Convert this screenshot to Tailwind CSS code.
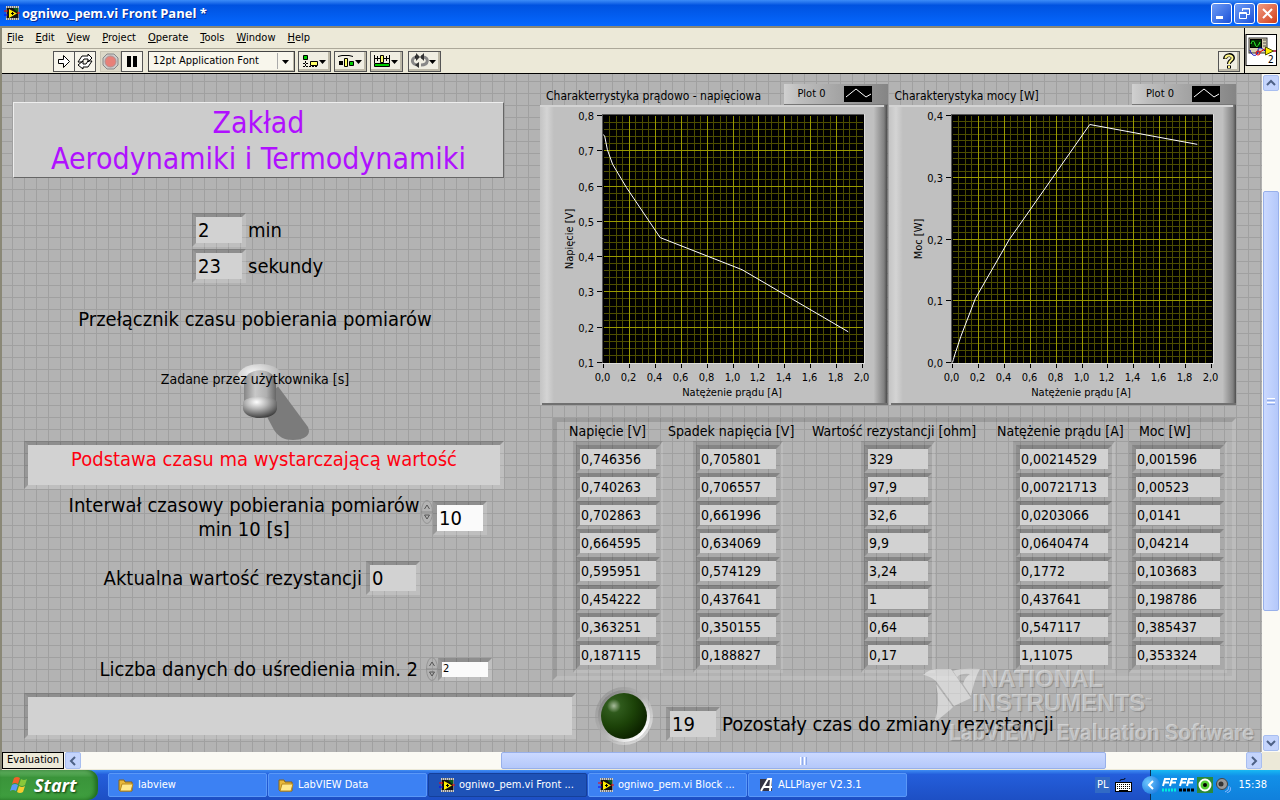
<!DOCTYPE html>
<html lang="pl">
<head>
    <meta charset="UTF-8">
    <meta name="viewport" content="width=device-width, initial-scale=1.0">
    <title>ogniwo_pem.vi Front Panel *</title>
    <script src="https://cdn.jsdelivr.net/npm/@tailwindcss/browser@4"></script>
</head>
<body class="min-h-screen flex flex-col bg-[#ece9d8] text-black text-[11px] leading-4 font-['DejaVu_Sans_Condensed','DejaVu_Sans',sans-serif]">

    <!-- Shared icons -->
    <svg class="hidden">
        <symbol id="vi-icon" viewBox="0 0 16 16">
            <rect x="2" y="1" width="13" height="14" fill="#777"/>
            <path d="M2 2h13M2 14h13" stroke="#ccc" stroke-width="2" stroke-dasharray="1 1"/>
            <rect x="3" y="3" width="11" height="10" fill="#111"/>
            <path d="M9 3h5v5z" fill="#0a5a1a"/>
            <path d="M5 4l8 4.500l-8 4.500z" fill="#ffee00"/>
            <path d="M7 8.500h3M8.500 7v3" stroke="#000"/>
            <path d="M0 6h4M13 8h3" stroke="#f00"/>
            <path d="M0 10h4" stroke="#00f"/>
        </symbol>
        <symbol id="folder-icon" viewBox="0 0 16 16">
            <path d="M1 3h5l1 2h7v9H2L1 13z" fill="#e8b83a" stroke="#8a6414"/>
            <path d="M4 7h11l-2 7H2z" fill="#ffe98c" stroke="#b98a1e"/>
        </symbol>
        <symbol id="spin-icon" viewBox="0 0 12 24">
            <ellipse cx="6" cy="12" rx="5.500" ry="11.500" fill="url(#spin-fill)" stroke="#959595"/>
            <path d="M0 12h12" stroke="#8a8a8a"/>
            <path d="M3.500 9L6 5l2.500 4M3.500 15L6 19l2.500-4z" fill="none" stroke="#555"/>
        </symbol>
        <defs>
            <linearGradient id="spin-fill">
                <stop offset="0" stop-color="#eee"/>
                <stop offset="1" stop-color="#a0a0a0"/>
            </linearGradient>
        </defs>
    </svg>

    <!-- Title bar -->
    <header class="h-[26px] shrink-0 flex items-center pl-1 pr-[2px] bg-linear-to-b from-[#3c8cf8] via-[#0052e0] via-20% to-[#0668ff]">
        <svg class="size-4"><use href="#vi-icon"/></svg>
        <h1 class="ml-[2px] flex-1 text-[13px] font-bold text-white font-['Open_Sans',sans-serif] [text-shadow:1px_1px_#0a2a90]">ogniwo_pem.vi Front Panel *</h1>
        <div class="flex gap-[2px]">
            <button aria-label="Minimize" class="w-[21px] h-[21px] rounded-[3px] border border-white bg-linear-to-br from-[#6f9cf5] to-[#1c4fd8]">
                <svg class="size-[19px]" viewBox="0 0 19 19"><path d="M4 13.500h7" stroke="#fff" stroke-width="3"/></svg>
            </button>
            <button aria-label="Restore" class="w-[21px] h-[21px] rounded-[3px] border border-white bg-linear-to-br from-[#6f9cf5] to-[#1c4fd8]">
                <svg class="size-[19px]" viewBox="0 0 19 19" fill="none" stroke="#fff"><path d="M7.500 7V4.500h7v6H12M7 5h8M4.500 8.500h7v6h-7zM4 9.500h8"/></svg>
            </button>
            <button aria-label="Close" class="w-[21px] h-[21px] rounded-[3px] border border-white bg-linear-to-br from-[#f09a80] to-[#d03a10]">
                <svg class="size-[19px]" viewBox="0 0 19 19"><path d="M5 5l9 9M14 5l-9 9" stroke="#fff" stroke-width="2"/></svg>
            </button>
        </div>
    </header>

    <div class="flex-1 flex flex-col border-t-2 border-l-2 border-t-[#8a8877] border-l-[#8a8877]">
        <!-- Menu and toolbar -->
        <div class="flex h-[46px] border-b border-black shrink-0">
            <div class="flex-1">
                <nav class="h-[21px] flex items-center gap-3 pl-[5px] pb-px border-b border-[#aca899]">
                    <a href="#"><u>F</u>ile</a>
                    <a href="#"><u>E</u>dit</a>
                    <a href="#"><u>V</u>iew</a>
                    <a href="#"><u>P</u>roject</a>
                    <a href="#"><u>O</u>perate</a>
                    <a href="#"><u>T</u>ools</a>
                    <a href="#"><u>W</u>indow</a>
                    <a href="#"><u>H</u>elp</a>
                </nav>
                <div class="h-6 flex items-center pl-[51px] pr-1">
                    <button aria-label="Run" class="w-[22px] h-[21px] border border-[#555] bg-[#f6f4ea]">
                        <svg class="w-5 h-[19px]" viewBox="0 0 20 19"><path d="M4.500 7.500h5v-4l6 6l-6 6v-4h-5z" fill="#fff" stroke="#000"/></svg>
                    </button>
                    <button aria-label="Run continuously" class="w-[21px] h-[21px] border border-l-0 border-[#555] bg-[#f6f4ea]">
                        <svg class="w-5 h-[19px]" viewBox="0 0 20 19" fill="none" stroke="#000"><path d="M3 10l4-6h6V2l4 4l-4 4V7H9l-2 3zM17 9l-4 6H8v2l-5-4l5-4v3h3l2-3z" fill="#fff"/></svg>
                    </button>
                    <button aria-label="Abort" class="ml-1 w-[21px] h-[21px] border border-[#c8c4b4] bg-[#dcd8c8]">
                        <svg class="size-[19px]" viewBox="0 0 19 19"><path d="M6 2h7l4 4v7l-4 4H6l-4-4V6z" fill="#ccc" stroke="#888"/><circle cx="9.500" cy="9.500" r="5.500" fill="#e88078" stroke="#b09090"/></svg>
                    </button>
                    <button aria-label="Pause" class="w-[22px] h-[21px] border border-[#555] bg-[#f6f4ea]">
                        <svg class="w-5 h-[19px]" viewBox="0 0 20 19"><path d="M5 4h4v11H5zM11 4h4v11h-4z"/></svg>
                    </button>
                    <div class="relative ml-[5px]">
                        <select aria-label="Font" class="block appearance-none w-[147px] h-[21px] pl-1 pb-px text-[11px] border border-[#444] bg-[#f8f6ec] shadow-[inset_-1px_-1px_#bdb9a8]">
                            <option>12pt Application Font</option>
                        </select>
                        <svg class="absolute right-[2px] top-[2px] w-4 h-4 pointer-events-none" viewBox="0 0 16 16"><path d="M.5 0v16" stroke="#aaa"/><path d="M5 7h7l-3.500 4z"/></svg>
                    </div>
                    <div class="flex gap-[3px] ml-[3px]">
                        <button aria-label="Align objects" class="w-[33px] h-[21px] border border-[#555] bg-[#f0eee2] shadow-[inset_-2px_-2px_#bdb9a8]">
                            <svg class="w-[31px] h-[19px]" viewBox="0 0 31 19"><path d="M4.500 3.500h4v4h-4z" fill="#0c0" stroke="#000"/><path d="M6.500 9v5M4 11.500h5M4 14.500h15" stroke="#000" stroke-dasharray="2 1"/><path d="M11.500 9.500h7v4h-7z" fill="#ff6" stroke="#000"/><path d="M20 8h7l-3.500 4z"/></svg>
                        </button>
                        <button aria-label="Distribute objects" class="w-[33px] h-[21px] border border-[#555] bg-[#f0eee2] shadow-[inset_-2px_-2px_#bdb9a8]">
                            <svg class="w-[31px] h-[19px]" viewBox="0 0 31 19"><path d="M3 4.500l4-1h7l4 1" fill="none" stroke="#000"/><path d="M4 9h4v4H4z"/><path d="M9.500 6.500h3v8h-3z" fill="#ff6" stroke="#000"/><path d="M14.500 9.500h4v4h-4z" fill="#0c0" stroke="#000"/><path d="M20 8h7l-3.500 4z"/></svg>
                        </button>
                        <button aria-label="Resize objects" class="w-[33px] h-[21px] border border-[#555] bg-[#f0eee2] shadow-[inset_-2px_-2px_#bdb9a8]">
                            <svg class="w-[31px] h-[19px]" viewBox="0 0 31 19"><path d="M3.500 3v8M18.500 3v8M4 6.500h5M13 6.500h5M6.500 4v5M15.500 4v5" stroke="#000"/><path d="M9.500 3.500h3v7h-3z" fill="#ff6" stroke="#000"/><path d="M3.500 11.500h15v3h-15z" fill="#0c0" stroke="#000"/><path d="M20 8h7l-3.500 4z"/></svg>
                        </button>
                    </div>
                    <button aria-label="Reorder" class="ml-[5px] w-[33px] h-[21px] border border-[#555] bg-[#f0eee2] shadow-[inset_-2px_-2px_#bdb9a8]">
                        <svg class="w-[31px] h-[19px]" viewBox="0 0 31 19" fill="none"><path d="M10 13C1 13 2 5 8 5" stroke="#888" stroke-width="3"/><path d="M12 13c8 0 8-8 2-8" stroke="#888" stroke-width="3"/><path d="M6 5h3M12 5h3" stroke="#222" stroke-width="3"/><path d="M7 1v8l4-4zM15 1v8l-4-4zM10 10v6l-4-3z" fill="#333"/><path d="M20 8h7l-3.500 4z" fill="#000"/></svg>
                    </button>
                    <button aria-label="Help" class="ml-auto w-[22px] h-[21px] border border-[#555] bg-[#f0eee2] shadow-[inset_-2px_-2px_#bdb9a8]">
                        <svg class="w-5 h-[19px]" viewBox="0 0 20 19" fill="none"><path d="M6 7c0-5 8-5 8-1c0 3-4 2-4 6M10 13.500v3" stroke="#000" stroke-width="4"/><path d="M6.500 6.500c0-4 7-4 7-.5c0 3-3.500 2-3.500 6M10 14v2" stroke="#fff68a" stroke-width="2"/></svg>
                    </button>
                </div>
            </div>
            <div class="border-l border-black w-9 pt-[6px]">
                <svg class="w-8 h-8" viewBox="0 0 32 32">
                    <rect x="1" y=".5" width="30.500" height="31" fill="#fff" stroke="#000"/>
                    <rect x="4" y="4" width="18" height="15" fill="#d8d0b0" stroke="#333"/>
                    <rect x="5.500" y="5.500" width="11" height="8" fill="#003000" stroke="#000"/>
                    <path d="M6 10c1-4 3-4 4 0s3 3 5-2" stroke="#3f3" fill="none"/>
                    <path d="M18 6h3M18 9h3M18 12h3" stroke="#555"/>
                    <path d="M5 16c2 8 8 6 8 1s4-3 7 0M27 17h4" stroke="#00c" fill="none"/>
                    <circle cx="13" cy="19" r="2" fill="none" stroke="#e00"/><path d="M15 18l5-3M27 17h4" stroke="#e00"/>
                    <path d="M20.500 13l8 4l-8 4z" fill="#fe0" stroke="#550"/>
                    <text x="23" y="29" font-size="10">2</text>
                </svg>
            </div>
        </div>

        <div class="flex flex-1">
            <!-- Front panel -->
            <main class="relative flex-1 min-w-0 bg-[#b3b3b3] bg-[linear-gradient(#a0a0a0_1px,transparent_1px),linear-gradient(90deg,#a0a0a0_1px,transparent_1px)] bg-[size:12px_12px] bg-[position:10px_7px]">
                <div class="flex">
                    <section class="w-[538px] shrink-0 text-[20px] leading-6">
                        <h2 class="ml-[11px] mt-7 w-[491px] h-[76px] pt-[2px] text-center text-[30px] leading-9 text-[#b010ff] bg-[#ccc] border border-t-[#eee] border-l-[#eee] border-r-[#666] border-b-[#666]">Zakład<br>Aerodynamiki i Termodynamiki</h2>

                        <div class="ml-[190px] mt-[35px] grid gap-[2px]">
                            <label class="flex items-center gap-[2px]">
                                <input readonly value="2" class="w-[54px] h-[34px] pl-[2px] bg-[#d2d2d2] bg-clip-padding border-4 border-t-black/20 border-l-black/15 border-b-white/15 border-r-white/15"> min
                            </label>
                            <label class="flex items-center gap-[2px]">
                                <input readonly value="23" class="w-[54px] h-[34px] pl-[2px] bg-[#d2d2d2] bg-clip-padding border-4 border-t-black/20 border-l-black/15 border-b-white/15 border-r-white/15"> sekundy
                            </label>
                        </div>

                        <p class="ml-[13px] w-[480px] mt-6 text-center">Przełącznik czasu pobierania pomiarów</p>

                        <button role="switch" aria-checked="false" class="relative block ml-[13px] w-[480px] h-[78px] mt-8">
                            <svg class="absolute left-[220px] top-0 w-[76px] h-[78px]" viewBox="0 0 76 78">
                                <defs>
                                    <linearGradient id="stem"><stop offset="0" stop-color="#858585"/><stop offset=".35" stop-color="#c8c8c8"/><stop offset=".7" stop-color="#b0b0b0"/><stop offset="1" stop-color="#666"/></linearGradient>
                                    <radialGradient id="knob" cx=".4" cy=".25" r=".8"><stop offset="0" stop-color="#fff"/><stop offset=".4" stop-color="#b5b5b5"/><stop offset="1" stop-color="#333"/></radialGradient>
                                    <radialGradient id="collar" cx=".35" cy=".3" r=".7"><stop offset="0" stop-color="#f4f4f4"/><stop offset="1" stop-color="#aaa"/></radialGradient>
                                </defs>
                                <path d="M30 50L42 22L73 64c4 9-5 13-15 13c-9 0-14-3-19-10z" fill="#7b7b7b"/>
                                <ellipse cx="25" cy="15" rx="23" ry="14" fill="url(#collar)"/>
                                <path d="M9 20C10 3 40 3 41 20V42H9z" fill="url(#stem)"/>
                                <path d="M8 39c4-7 30-7 34 0v7c-2 12-32 12-34 0z" fill="url(#knob)"/>
                            </svg>
                            <span class="absolute inset-x-0 top-1 text-[14px]">Zadane przez użytkownika [s]</span>
                        </button>

                        <output class="block ml-[22px] w-[480px] h-12 text-center leading-7 text-[#ff0010] bg-[#d2d2d2] bg-clip-padding border-4 border-t-black/20 border-l-black/15 border-b-white/15 border-r-white/15">Podstawa czasu ma wystarczającą wartość</output>

                        <div class="flex mt-1 ml-[65px]">
                            <label for="interval" class="w-[354px] text-center">Interwał czasowy pobierania pomiarów min 10 [s]</label>
                            <svg class="w-3 h-6 mt-[7px]"><use href="#spin-icon"/></svg>
                            <input id="interval" value="10" class="w-[54px] h-[34px] mt-2 pl-[2px] bg-[#fafafa] bg-clip-padding border-4 border-t-black/20 border-l-black/15 border-b-white/15 border-r-white/15">
                        </div>

                        <div class="flex items-center justify-end mt-5 mr-[120px] gap-1">
                            <label for="resistance">Aktualna wartość rezystancji</label>
                            <input id="resistance" readonly value="0" class="w-[54px] h-[34px] pl-[2px] bg-[#d2d2d2] bg-clip-padding border-4 border-t-black/20 border-l-black/15 border-b-white/15 border-r-white/15">
                        </div>

                        <div class="flex items-center justify-end mt-[62px] mr-[48px]">
                            <label for="samples" class="mr-2">Liczba danych do uśredienia min. 2</label>
                            <svg class="w-3 h-6"><use href="#spin-icon"/></svg>
                            <input id="samples" value="2" class="w-[54px] h-[23px] pl-[1px] text-[11px] bg-[#fafafa] bg-clip-padding border-4 border-t-black/20 border-l-black/15 border-b-white/15 border-r-white/15">
                        </div>
                    </section>

                    <section class="flex-1 min-w-0 mr-[26px] pt-[10px]">
                        <div class="flex gap-px">
                            <figure class="flex-1">
                                <figcaption class="flex h-[21px] text-xs">
                                    <span class="flex-1 pl-[6px] pt-1 whitespace-nowrap">Charakterrystyka prądowo - napięciowa</span>
                                    <span class="w-[104px] flex items-center justify-end gap-[18px] pr-4 text-[11px] bg-linear-to-r from-[#d0d0d0] via-[#bebebe] via-15% to-[#858585] border-b border-[#777]">Plot 0
                                        <svg class="w-7 h-4 bg-black"><path d="M2 11L12 3l10 8l5-3" fill="none" stroke="#fff"/></svg>
                                    </span>
                                </figcaption>
                                <svg id="chart-voltage" class="block w-full h-[300px]"></svg>
                            </figure>
                            <figure class="flex-1">
                                <figcaption class="flex h-[21px] text-xs">
                                    <span class="flex-1 pl-[6px] pt-1 whitespace-nowrap">Charakterystyka mocy [W]</span>
                                    <span class="w-[104px] flex items-center justify-end gap-[18px] pr-4 text-[11px] bg-linear-to-r from-[#d0d0d0] via-[#bebebe] via-15% to-[#858585] border-b border-[#777]">Plot 0
                                        <svg class="w-7 h-4 bg-black"><path d="M2 11L12 3l10 8l5-3" fill="none" stroke="#fff"/></svg>
                                    </span>
                                </figcaption>
                                <svg id="chart-power" class="block w-full h-[300px]"></svg>
                            </figure>
                        </div>

                        <!-- Measurements -->
                        <div class="ml-[13px] mt-[13px] pb-[3px] border-4 border-t-black/12 border-l-black/12 border-b-white/12 border-r-white/12">
                            <table class="table-fixed w-full text-[14px] leading-5">
                                <colgroup>
                                    <col class="w-[108px]"><col class="w-[145px]"><col class="w-[182px]"><col class="w-[137px]"><col>
                                </colgroup>
                                <thead>
                                    <tr class="h-[19px] text-left leading-[19px] whitespace-nowrap">
                                        <th class="p-0 pl-3 font-normal">Napięcie [V]</th>
                                        <th class="p-0 pl-[3px] font-normal">Spadek napięcia [V]</th>
                                        <th class="p-0 pl-[2px] font-normal">Wartość rezystancji [ohm]</th>
                                        <th class="p-0 pl-[5px] font-normal">Natężenie prądu [A]</th>
                                        <th class="p-0 pl-[10px] font-normal">Moc [W]</th>
                                    </tr>
                                </thead>
                                <tbody id="measurements"></tbody>
                            </table>
                        </div>
                    </section>
                </div>

                <div class="flex items-center mt-[6px] pb-[6px] text-[20px] leading-6">
                    <output class="block ml-[22px] w-[552px] h-[46px] bg-[#d2d2d2] bg-clip-padding border-4 border-t-black/20 border-l-black/15 border-b-white/15 border-r-white/15"></output>
                    <svg class="ml-[17px] w-[62px] h-[58px]" viewBox="-31 -29 62 58">
                        <defs>
                            <linearGradient id="ring" x1="0" y1="0" x2="1" y2="1"><stop offset="0" stop-color="#777"/><stop offset=".5" stop-color="#b3b3b3"/><stop offset=".85" stop-color="#fff"/><stop offset="1" stop-color="#c0c0c0"/></linearGradient>
                            <radialGradient id="led" cx=".28" cy=".28" r=".75"><stop offset="0" stop-color="#a8bc9c"/><stop offset=".2" stop-color="#2f5a1c"/><stop offset=".6" stop-color="#1c4208"/><stop offset="1" stop-color="#0d2400"/></radialGradient>
                        </defs>
                        <circle r="29" fill="url(#ring)" opacity=".5"/>
                        <circle r="26" fill="url(#ring)"/>
                        <circle r="23" fill="url(#led)"/>
                    </svg>
                    <label class="flex items-center gap-[2px] pt-4 ml-[11px] whitespace-nowrap">
                        <input readonly value="19" class="w-[54px] h-[34px] pl-[2px] bg-[#d2d2d2] bg-clip-padding border-4 border-t-black/20 border-l-black/15 border-b-white/15 border-r-white/15"> Pozostały czas do zmiany rezystancji
                    </label>
                </div>

                <!-- Evaluation watermark -->
                <div class="absolute right-[8px] bottom-[3px] w-[333px] h-[82px] pointer-events-none font-bold text-white/45 font-['Liberation_Sans',sans-serif] [text-shadow:1px_1px_1px_#0003]">
                    <svg class="absolute left-0 top-0 w-[60px] h-[58px]" viewBox="0 0 60 58" fill="#fff" fill-opacity=".45">
                        <path d="M2 8Q8 2 16 2H30L50 31L33 39L15 14Q9 9 2 8z"/>
                        <path d="M15 17L32 40L29 43L13 56Q20 36 15 17z"/>
                        <path d="M32 4Q38 1 59 2Q54 10 50 29L42 17Q44 10 49 7Q40 6 36 10z"/>
                    </svg>
                    <p class="pl-[60px] text-[24px] leading-6">NATIONAL</p>
                    <p class="pl-[51px] text-[24px] leading-6">INSTRUMENTS<span class="align-super text-[6px] leading-none">™</span></p>
                    <p class="flex justify-between pl-7 pt-1 text-[22px] leading-7 font-['Roboto',sans-serif]"><span>LabVIEW</span><span>Evaluation Software</span></p>
                </div>
            </main>

            <!-- Vertical scrollbar -->
            <div class="w-[18px] flex flex-col p-px bg-[#fbfaf4]">
                <button aria-label="Scroll up" class="h-4 rounded-[2px] border border-[#a8bef0] bg-[#c4d4fc]"><svg class="size-[14px]" viewBox="0 0 14 14"><path d="M3 9l4-4l4 4" fill="none" stroke="#4d6185" stroke-width="2"/></svg></button>
                <div class="flex-[100]"></div>
                <div class="flex-[420] rounded-[2px] border border-[#98b0ea] bg-linear-to-r from-[#cbd9ff] to-[#b4c8fa] flex flex-col items-center justify-center gap-px">
                    <span class="w-2 h-px bg-white"></span><span class="w-2 h-px bg-[#8fabea]"></span><span class="w-2 h-px bg-white"></span><span class="w-2 h-px bg-[#8fabea]"></span>
                </div>
                <div class="flex-[124]"></div>
                <button aria-label="Scroll down" class="h-4 rounded-[2px] border border-[#a8bef0] bg-[#c4d4fc]"><svg class="size-[14px]" viewBox="0 0 14 14"><path d="M3 5l4 4l4-4" fill="none" stroke="#4d6185" stroke-width="2"/></svg></button>
            </div>
        </div>

        <!-- Status and horizontal scrollbar -->
        <div class="h-[18px] flex shrink-0 bg-[#fbfaf4] border-b border-[#ece9d8]">
            <span class="w-[62px] border border-black bg-[#ece9d8] text-center leading-[14px]">Evaluation</span>
            <button aria-label="Scroll left" class="ml-[1px] w-4 rounded-[2px] border border-[#a8bef0] bg-[#c4d4fc]"><svg class="size-[14px]" viewBox="0 0 14 14"><path d="M9 3L5 7l4 4" fill="none" stroke="#4d6185" stroke-width="2"/></svg></button>
            <div class="flex-[420]"></div>
            <div class="flex-[603] rounded-[2px] border border-[#98b0ea] bg-linear-to-b from-[#cbd9ff] to-[#b4c8fa] flex items-center justify-center gap-px">
                <span class="h-2 w-px bg-white"></span><span class="h-2 w-px bg-[#8fabea]"></span><span class="h-2 w-px bg-white"></span><span class="h-2 w-px bg-[#8fabea]"></span>
            </div>
            <div class="flex-[140]"></div>
            <button aria-label="Scroll right" class="w-4 rounded-[2px] border border-[#a8bef0] bg-[#c4d4fc]"><svg class="size-[14px]" viewBox="0 0 14 14"><path d="M5 3l4 4l-4 4" fill="none" stroke="#4d6185" stroke-width="2"/></svg></button>
            <div class="w-[18px] bg-[#ece9d8]"></div>
        </div>
    </div>

    <!-- Taskbar -->
    <footer class="h-[30px] shrink-0 flex items-center text-white bg-linear-to-b from-[#3f8cf3] via-[#245edb] via-15% to-[#1d4fc4]">
        <button class="w-[98px] h-full flex items-center gap-1 pl-[10px] rounded-r-[10px] text-[18px] italic font-bold font-['Open_Sans',sans-serif] [text-shadow:1px_1px_2px_#0a3a0a] bg-linear-to-b from-[#6cb96c] via-[#3a943a] via-25% to-[#3f9f3f] shadow-[inset_-3px_0_4px_#1f6a1f]">
            <svg class="w-5 h-5" viewBox="0 0 20 20"><path d="M4 3q3-2 6 0l-2 6q-3-2-6 0z" fill="#f0602a"/><path d="M11 4q3 2 6 0l-2 6q-3 2-6 0z" fill="#8ac83a"/><path d="M2 10q3-2 6 0l-2 6q-3-2-6 0z" fill="#5a9af8"/><path d="M9 11q3 2 6 0l-2 6q-3 2-6 0z" fill="#f8cc30"/></svg>
            Start
        </button>
        <div class="flex gap-px ml-[10px]">
            <button class="w-[159px] h-6 flex items-center gap-1 pl-[9px] rounded-[2px] bg-[#3c81f3] border border-[#5a98f8]"><svg class="size-4"><use href="#folder-icon"/></svg>labview</button>
            <button class="w-[159px] h-6 flex items-center gap-1 pl-[9px] rounded-[2px] bg-[#3c81f3] border border-[#5a98f8]"><svg class="size-4"><use href="#folder-icon"/></svg>LabVIEW Data</button>
            <button class="w-[159px] h-6 flex items-center gap-1 pl-[10px] rounded-[2px] bg-[#1e52b7] border border-[#15409a]"><svg class="size-4"><use href="#vi-icon"/></svg>ogniwo_pem.vi Front ...</button>
            <button class="w-[159px] h-6 flex items-center gap-1 pl-[9px] rounded-[2px] bg-[#3c81f3] border border-[#5a98f8]"><svg class="size-4"><use href="#vi-icon"/></svg>ogniwo_pem.vi Block ...</button>
            <button class="w-[159px] h-6 flex items-center gap-1 pl-[9px] rounded-[2px] bg-[#3c81f3] border border-[#5a98f8]"><svg class="size-4" viewBox="0 0 16 16"><rect x="2" y="2" width="12" height="12" fill="#334"/><path d="M3 14L10 2h3l-1 12M5 10h9" fill="none" stroke="#fff" stroke-width="2"/></svg>ALLPlayer V2.3.1</button>
        </div>
        <span class="ml-auto px-[2px] bg-[#316ac5]">PL</span>
        <svg class="ml-[5px] w-[17px] h-4" viewBox="0 0 17 16"><path d="M5 4c0-3 5 0 5-3" fill="none" stroke="#000"/><rect x=".5" y="5.500" width="16" height="9" fill="#fff" stroke="#000"/><path d="M2 7.500h13M2 9.500h13M2 11.500h13" stroke="#000" stroke-dasharray="1 1"/><path d="M4 13.500h9" stroke="#000"/></svg>
        <div class="relative h-full flex items-center ml-[18px] pl-[10px] pr-[13px] bg-linear-to-b from-[#19b9f3] via-[#1290e8] via-20% to-[#1080dc] border-l border-[#092e51]">
            <button aria-label="Show hidden icons" class="absolute -left-[9px] size-[18px] rounded-full bg-radial-[at_35%_35%] from-[#6fc8ff] to-[#0a6ad8]"><svg class="size-[18px]" viewBox="0 0 18 18"><path d="M11 5L7 9l4 4" fill="none" stroke="#fff" stroke-width="2"/></svg></button>
            <svg class="w-[34px] h-4" viewBox="0 0 34 16"><path d="M2 9L4 2h5M3 5.500h5M9 9l2-7h5M10 5.500h5M19 9l2-7h5M20 5.500h5M26 9l2-7h5M27 5.500h5" fill="none" stroke="#fff" stroke-width="2"/><path d="M1 13h15" stroke="#0ed" stroke-width="3" stroke-dasharray="2 1"/><path d="M18 13h15" stroke="#000" stroke-width="3" stroke-dasharray="3 1"/></svg>
            <svg class="ml-[2px] w-4 h-4" viewBox="0 0 16 16"><rect width="16" height="16" fill="#2a8a3a"/><circle cx="8" cy="8" r="5.500" fill="#5c3" stroke="#fff" stroke-width="2"/><circle cx="8" cy="8" r="2"/></svg>
            <svg class="ml-[2px] w-4 h-4" viewBox="0 0 16 16"><circle cx="7" cy="7" r="5.500" fill="#999" stroke="#444"/><circle cx="6" cy="7" r="2.500" fill="#333"/><path d="M10 15q4-1 4-6M12 16q4-1 4-6" fill="none" stroke="#8ab8ff"/></svg>
            <span class="ml-[7px]">15:38</span>
        </div>
    </footer>

    <script>
        // Measurement table
        const rows = [
            ['0,746356', '0,705801', '329', '0,00214529', '0,001596'],
            ['0,740263', '0,706557', '97,9', '0,00721713', '0,00523'],
            ['0,702863', '0,661996', '32,6', '0,0203066', '0,0141'],
            ['0,664595', '0,634069', '9,9', '0,0640474', '0,04214'],
            ['0,595951', '0,574129', '3,24', '0,1772', '0,103683'],
            ['0,454222', '0,437641', '1', '0,437641', '0,198786'],
            ['0,363251', '0,350155', '0,64', '0,547117', '0,385437'],
            ['0,187115', '0,188827', '0,17', '1,11075', '0,353324'],
        ];
        const cols = ['ml-4 w-[90px]', 'ml-7 w-[90px]', 'ml-[51px] w-[74px]', 'ml-[21px] w-[102px]', 'ml-0 w-[98px]'];
        document.getElementById('measurements').innerHTML = rows.map((row, r) => '<tr>' + row.map((value, c) => {
            const edge = r === 0 ? 'border-t-4' : r === rows.length - 1 ? 'border-b-4' : '';
            return `<td class="p-0"><div class="${cols[c]} ${edge} border-x-3 border-t-black/12 border-l-black/10 border-b-white/12 border-r-white/12">
                <div class="h-7 pl-px bg-[#d2d2d2] bg-clip-padding border-4 border-t-black/25 border-l-black/20 border-b-black/5 border-r-black/5">${value}</div></div></td>`;
        }).join('') + '</tr>').join('');

        // Charts
        function drawChart(id, opt) {
            const x0 = 63.5, y0 = 10.5, w = 259, h = 247;
            const yMax = opt.yMin + opt.ySteps / 10;
            const px = x => x0 + x / 2 * w;
            const py = y => y0 + (yMax - y) / (yMax - opt.yMin) * h;
            const num = v => v.toFixed(1).replace('.', ',');
            const line = (a, b, c, d, color) => `<path d="M${a} ${b}L${c} ${d}" stroke="${color}" shape-rendering="crispEdges"/>`;
            let minor = '', major = '', labels = '';
            for (let i = 0; i <= 40; i++) {
                const x = Math.floor(px(i / 20)) + .5;
                if (i % 4) minor += line(x, y0, x, y0 + h, '#4d4d00');
                else {
                    if (i > 0 && i < 40) major += line(x, y0, x, y0 + h, '#999900');
                    labels += line(x, 259, x, 263, '#000') + `<text x="${x - 1}" y="276" text-anchor="middle">${num(i / 20)}</text>`;
                }
            }
            const n = opt.ySteps * opt.yMinor;
            for (let i = 0; i <= n; i++) {
                const y = Math.round(y0 + i / n * h - .5) + .5;
                if (i % opt.yMinor) minor += line(x0, y, x0 + w, y, '#4d4d00');
                else {
                    if (i > 0 && i < n) major += line(x0, y, x0 + w, y, '#999900');
                    labels += line(57, y, 62, y, '#000') + `<text x="54" y="${y + 4}" text-anchor="end">${num(yMax - i / opt.yMinor / 10)}</text>`;
                }
            }
            const points = opt.data.map(([x, y]) => px(x) + ',' + py(y)).join(' ');
            document.getElementById(id).innerHTML = `
                <defs><linearGradient id="${id}-bg">
                    <stop offset="0" stop-color="#c4c4c4"/><stop offset=".02" stop-color="#d4d4d4"/><stop offset=".04" stop-color="#c0c0c0"/>
                    <stop offset=".96" stop-color="#c0c0c0"/><stop offset=".99" stop-color="#808080"/><stop offset="1" stop-color="#444"/>
                </linearGradient></defs>
                <rect width="100%" height="100%" fill="url(#${id}-bg)"/>
                <rect width="99%" height="2" fill="#d4d4d4"/>
                <rect x="2" y="298" width="100%" height="2" fill="#707070"/>
                <rect x="62" y="9" width="263" height="250" fill="#ddd"/>
                <rect x="62" y="9" width="262" height="249" fill="#555"/>
                <rect x="63" y="10" width="261" height="248" fill="#000"/>
                ${minor}${major}
                <polyline points="${points}" fill="none" stroke="#fff"/>
                <g font-size="11">${labels}
                    <text x="192" y="291" text-anchor="middle">Natężenie prądu [A]</text>
                    <text transform="translate(33 134) rotate(-90)" text-anchor="middle">${opt.yLabel}</text>
                </g>`;
        }
        drawChart('chart-voltage', {
            yMin: .1, ySteps: 7, yMinor: 5, yLabel: 'Napięcie [V]',
            data: [[0, .746], [.01, .74], [.03, .703], [.07, .662], [.177, .596], [.4376, .454], [1.07, .363], [1.89, .187]],
        });
        drawChart('chart-power', {
            yMin: 0, ySteps: 4, yMinor: 10, yLabel: 'Moc [W]',
            data: [[0, 0], [.007, .005], [.02, .0141], [.064, .042], [.177, .1037], [.4376, .1988], [1.06, .3854], [1.89, .3533]],
        });
    </script>
</body>
</html>
